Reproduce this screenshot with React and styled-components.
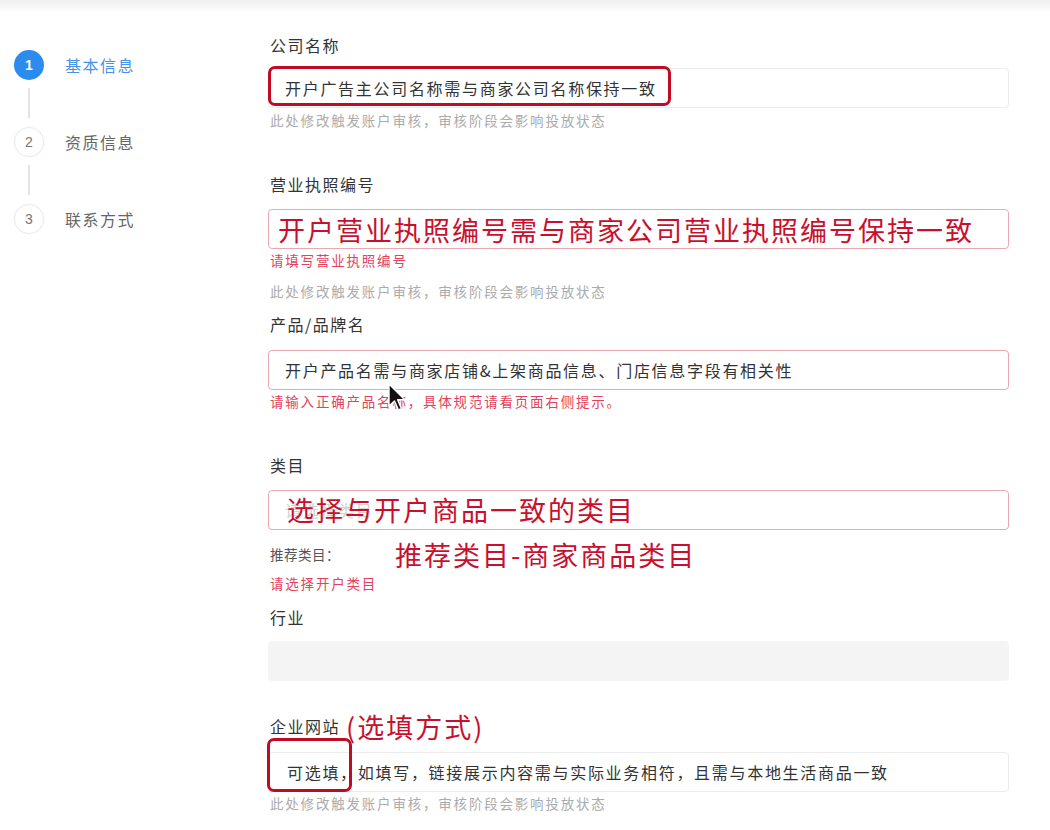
import React from 'react';
import styled, { createGlobalStyle } from 'styled-components';

const GlobalStyle = createGlobalStyle`
  html, body {
    margin: 0;
    padding: 0;
    background: #fff;
  }
  body {
    font-family: "Noto Sans CJK SC", "Noto Sans", sans-serif;
    color: #333;
  }
`

const Page = styled.div`
  position: relative;
  width: 1050px;
  height: 830px;
  overflow: hidden;
  display: flex;
  flex-direction: column;
`

const TopShade = styled.div`
  height: 12px;
  background: linear-gradient(#f0f0f0, #fdfdfd);
`

const Body = styled.div`
  display: flex;
  flex-direction: row;
`

const Sidebar = styled.div`
  width: 268px;
  box-sizing: border-box;
  padding-top: 38px;
  padding-left: 14px;
  display: flex;
  flex-direction: column;
`

const Step = styled.div`
  display: flex;
  align-items: center;
  gap: 21px;
`

const StepCircle = styled.div`
  width: 30px;
  height: 30px;
  border-radius: 50%;
  box-sizing: border-box;
  display: flex;
  align-items: center;
  justify-content: center;
  font-family: "Liberation Sans", sans-serif;
  font-size: 14px;
  font-weight: ${p => (p.$active ? 700 : 400)};
  background: ${p => (p.$active ? '#2b8bef' : '#fff')};
  color: ${p => (p.$active ? '#fff' : '#777')};
  border: ${p => (p.$active ? 'none' : '1px solid #ececec')};
  box-shadow: ${p => (p.$active ? 'none' : '0 0 2px rgba(0,0,0,0.06)')};
`

const StepLabel = styled.div`
  font-size: 16px;
  letter-spacing: 1.5px;
  color: ${p => (p.$active ? '#4892e6' : '#666')};
`

const StepLine = styled.div`
  width: 2px;
  height: 30px;
  margin: 8px 0 9px 14px;
  background: #e3e3e3;
`

const Form = styled.div`
  width: 741px;
  padding-top: 21px;
  display: flex;
  flex-direction: column;
`

const Label = styled.div`
  margin-top: ${p => p.$mt || 0}px;
  height: ${p => p.$h || 24}px;
  display: flex;
  align-items: center;
  gap: 6px;
  padding-left: 2px;
  font-size: 16px;
  letter-spacing: 1.5px;
  color: #333;
`

const InputWrap = styled.div`
  position: relative;
  margin-top: ${p => p.$mt || 0}px;
`

const Input = styled.div`
  height: 40px;
  box-sizing: border-box;
  display: flex;
  align-items: center;
  padding-left: ${p => p.$pad || 16}px;
  border: 1px solid ${p => (p.$error ? '#eaa8b1' : '#ebebeb')};
  border-radius: 4px;
  background: ${p => (p.$disabled ? '#f4f4f4' : '#fff')};
  font-size: 16px;
  letter-spacing: 1.7px;
  color: #333;
  white-space: nowrap;
  overflow: hidden;
  ${p => p.$disabled && 'border-color: #f4f4f4;'}
`

const Placeholder = styled.span`
  color: #d2d2d2;
`

const Note = styled.div`
  margin-top: ${p => p.$mt || 0}px;
  line-height: 20px;
  padding-left: 2px;
  font-size: 13.5px;
  letter-spacing: 1.8px;
  color: ${p => (p.$error ? '#e4415d' : '#ababab')};
  white-space: nowrap;
`

const Mark = styled.span`
  font-size: 27px;
  letter-spacing: 2px;
  color: #c8102e;
  line-height: 1;
  white-space: nowrap;
`

const MarkOver = styled(Mark)`
  position: absolute;
  left: ${p => p.$x}px;
  top: 50%;
  transform: translateY(-52%);
`

const RecommendRow = styled.div`
  margin-top: ${p => p.$mt || 0}px;
  height: 32px;
  display: flex;
  align-items: center;
  padding-left: 2px;
`

const RecommendLabel = styled.span`
  width: 125px;
  font-size: 13.5px;
  letter-spacing: 0.5px;
  color: #555;
`

const RedBox = styled.div`
  position: absolute;
  left: ${p => p.$x}px;
  top: ${p => p.$y}px;
  width: ${p => p.$w}px;
  height: ${p => p.$h}px;
  box-sizing: border-box;
  border: 3px solid #c10b25;
  border-radius: 7px;
  pointer-events: none;
`

const Cursor = styled.svg`
  position: absolute;
  left: 387px;
  top: 383px;
`

const HINT = '此处修改触发账户审核，审核阶段会影响投放状态'

const steps = [
  { n: 1, text: '基本信息', active: true },
  { n: 2, text: '资质信息' },
  { n: 3, text: '联系方式' },
]

export default function App() {
  return (
    <Page>
      <GlobalStyle />
      <TopShade />
      <Body>
        <Sidebar>
          {steps.map((s, i) => (
            <React.Fragment key={s.n}>
              <Step>
                <StepCircle $active={s.active}>{s.n}</StepCircle>
                <StepLabel $active={s.active}>{s.text}</StepLabel>
              </Step>
              {i < steps.length - 1 && <StepLine />}
            </React.Fragment>
          ))}
        </Sidebar>

        <Form>
          <Label>公司名称</Label>
          <InputWrap $mt={11}>
            <Input>开户广告主公司名称需与商家公司名称保持一致</Input>
            <RedBox $x={0} $y={-2} $w={403} $h={40} />
          </InputWrap>
          <Note $mt={2}>{HINT}</Note>

          <Label $mt={42}>营业执照编号</Label>
          <InputWrap $mt={13}>
            <Input $error $pad={9}>
              <Mark>开户营业执照编号需与商家公司营业执照编号保持一致</Mark>
            </Input>
          </InputWrap>
          <Note $mt={1} $error>请填写营业执照编号</Note>
          <Note $mt={11}>{HINT}</Note>

          <Label $mt={11}>产品/品牌名</Label>
          <InputWrap $mt={14}>
            <Input $error>开户产品名需与商家店铺&amp;上架商品信息、门店信息字段有相关性</Input>
          </InputWrap>
          <Note $mt={1} $error>请输入正确产品名称，具体规范请看页面右侧提示。</Note>

          <Label $mt={42}>类目</Label>
          <InputWrap $mt={13}>
            <Input $error>
              <Placeholder>请选择类目</Placeholder>
            </Input>
            <MarkOver $x={19}>选择与开户商品一致的类目</MarkOver>
          </InputWrap>
          <RecommendRow $mt={8}>
            <RecommendLabel>推荐类目：</RecommendLabel>
            <Mark>推荐类目-商家商品类目</Mark>
          </RecommendRow>
          <Note $mt={3} $error>请选择开户类目</Note>

          <Label $mt={12}>行业</Label>
          <InputWrap $mt={12}>
            <Input $disabled />
          </InputWrap>

          <Label $mt={28} $h={34}>
            企业网站
            <Mark>(选填方式)</Mark>
          </Label>
          <InputWrap $mt={9}>
            <Input $pad={18}>可选填，如填写，链接展示内容需与实际业务相符，且需与本地生活商品一致</Input>
            <RedBox $x={-1} $y={-14} $w={85} $h={54} />
          </InputWrap>
          <Note $mt={1}>{HINT}</Note>
        </Form>
      </Body>

      <Cursor width="20" height="30" viewBox="0 0 20 30">
        <path
          d="M2 1 L2 23 L7.5 18 L11.5 27 L14.5 25.6 L10.6 16.8 L17.5 16.5 Z"
          fill="#111"
          stroke="#fff"
          strokeWidth="1.4"
          strokeLinejoin="round"
        />
      </Cursor>
    </Page>
  )
}
